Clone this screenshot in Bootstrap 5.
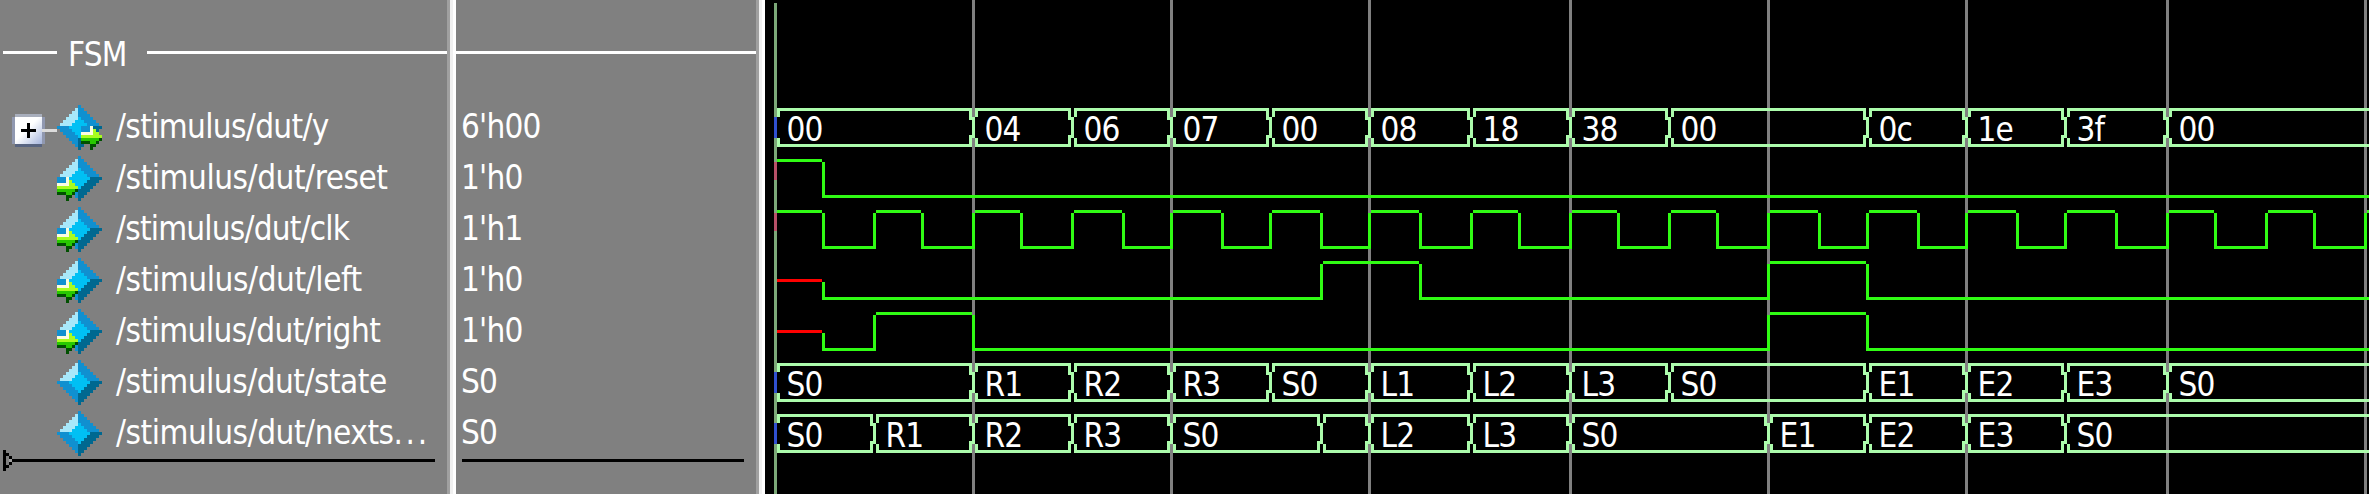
<!DOCTYPE html>
<html lang="en">
<head>
<meta charset="utf-8">
<meta name="viewport" content="width=device-width, initial-scale=1">
<title>Wave - FSM</title>
<link href="https://cdn.jsdelivr.net/npm/bootstrap@5.3.0/dist/css/bootstrap.min.css" rel="stylesheet">
<style>
  body { background: #000; color: #fff; font-family: "DejaVu Sans Condensed", "DejaVu Sans", sans-serif; font-stretch: condensed; font-size: 33px; letter-spacing: -.8px; }
  .viewer { height: 494px; }
  .pane { background: #808080; flex: none; }
  .names { width: 447px; }
  .values { width: 300px; }
  .sash { width: 9px; flex: none; background: linear-gradient(90deg, #a0a0a0 3px, #f0f0f0 3px 6px, #fff 6px); }
  .divider-row { height: 102px; padding-top: 51px; }
  .rule { height: 3px; background: #fff; }
  .rule-start { width: 54px; margin-left: 3px; }
  .divider-name { line-height: 51px; width: 90px; padding-left: 11px; margin-top: -22px; }
  .signal { height: 51px; }
  .signal span { line-height: 49px; white-space: pre; }
  .signal-icon { margin: 3px 14px 0 0; }
  .names svg, .waves svg { display: block; flex: none; }
  .tree { width: 57px; height: 51px; }
  .dots { letter-spacing: 2.6px; }
  .insert-mark { margin-top: -9px; }
  .values .signal { padding-left: 5px; }
  .values .endline { height: 3px; background: #000; margin: 0 12px 0 6px; }
  .waves { background: #000; }
  .waves text { fill: #fff; }
</style>
</head>
<body>
<main class="viewer d-flex overflow-hidden">
  <section class="pane names">
    <div class="divider-row d-flex">
      <div class="rule rule-start"></div>
      <div class="divider-name">FSM</div>
      <div class="rule flex-grow-1"></div>
    </div>
    <div id="names"></div>
    <svg class="insert-mark" width="447" height="21" viewBox="0 0 149 7" shape-rendering="crispEdges"><path d="M1 0h1v7h-1zM2 1h1v1h-1zM2 5h1v1h-1zM3 2h1v1h-1zM3 4h1v1h-1zM4 3h141v1h-141z"/><path fill="#a0a0a0" d="M3 3h1v1h-1z"/></svg>
  </section>
  <div class="sash"></div>
  <section class="pane values">
    <div class="divider-row"><div class="rule"></div></div>
    <div id="values"></div>
    <div class="endline"></div>
  </section>
  <div class="sash"></div>
  <section class="waves flex-grow-1 position-relative">
    <div id="grid" class="position-absolute top-0 start-0"></div>
    <div class="position-relative"><div class="divider-row"></div><div id="waves"></div></div>
  </section>
</main>
<script src="https://cdn.jsdelivr.net/npm/bootstrap@5.3.0/dist/js/bootstrap.bundle.min.js"></script>
<script>
  // One drawing unit is 3px; time positions are counted in units from the window's left edge.
  const U = 3, X0 = 255, END = 790;
  const clk = [258,274,291,307,324,340,357,374,390,407,423,440,456,473,490,506,523,539,556,572,589,606,622,639,655,672,688,705,722,738,755,771,788,800];
  const signals = [
    { name: 'y', track: -.65, value: "6'h00", dir: 'out', bus: [[258,'00'],[324,'04'],[357,'06'],[390,'07'],[423,'00'],[456,'08'],[490,'18'],[523,'38'],[556,'00'],[622,'0c'],[655,'1e'],[688,'3f'],[722,'00']] },
    { name: 'reset', track: -.45, value: "1'h0", dir: 'in', mark: 1, levels: [[258,1],[274,0]] },
    { name: 'clk', track: -.8, value: "1'h1", dir: 'in', mark: 1, levels: clk.map((x, i) => [x, i % 2 ? 0 : 1]) },
    { name: 'left', track: -.4, value: "1'h0", dir: 'in', levels: [[258,'x'],[274,0],[440,1],[473,0],[589,1],[622,0]] },
    { name: 'right', track: -.55, value: "1'h0", dir: 'in', levels: [[258,'x'],[274,0],[291,1],[324,0],[589,1],[622,0]] },
    { name: 'state', track: -.5, value: 'S0', bus: [[258,'S0'],[324,'R1'],[357,'R2'],[390,'R3'],[423,'S0'],[456,'L1'],[490,'L2'],[523,'L3'],[556,'S0'],[622,'E1'],[655,'E2'],[688,'E3'],[722,'S0']] },
    { name: 'nexts<b class="dots fw-normal">...</b>', track: -.45, value: 'S0', bus: [[258,'S0'],[291,'R1'],[324,'R2'],[357,'R3'],[390,'S0'],[440,''],[456,'L2'],[490,'L3'],[523,'S0'],[589,'E1'],[622,'E2'],[655,'E3'],[688,'S0']] }
  ];
  const box = (x, y, w, h, c) => `<rect x="${x}" y="${y}" width="${w}" height="${h}" fill="${c}"/>`;

  function diamond(dir) {
    let s = '';
    for (let r = 0; r < 15; r++) {
      const h = Math.min(r, 14 - r), k = 3 - Math.abs(r - 7);
      s += box(7 - h, r, h, 1, r < 7 ? '#a8e8fa' : '#1090d0');
      s += box(7, r, h + 1, 1, r < 7 ? '#1090d0' : '#006890');
      if (k >= 0) s += box(7 - k, r, 2 * k + 1, 1, '#00c0f4');
    }
    if (dir) {
      const o = dir === 'out' ? 8 : 0;
      s += box(o, 7, 3, 2, '#1090d0') + box(o + 3, 7, 1, 2, '#fcfce0') + box(o, 9, 4, 1, '#fcfce0')
        + box(o + 4, 8, 1, 1, '#a8fc20') + box(o + 4, 9, 2, 1, '#a8fc20') + box(o, 10, 7, 1, '#a8fc20')
        + box(o, 11, 6, 1, '#28c800') + box(o + 6, 11, 1, 1, '#005000') + box(o, 12, 6, 1, '#005000')
        + box(o + 3, 12, 2, 1, '#28c800') + box(o + 3, 13, 2, 1, '#005000') + box(o + 3, 14, 1, 1, '#005000');
    }
    return `<svg width="45" height="45" viewBox="0 0 15 15" shape-rendering="crispEdges">${s}</svg>`;
  }

  const expander = `<svg class="tree" viewBox="0 0 19 17" shape-rendering="crispEdges"><defs><linearGradient id="face" x1="0" y1="0" x2="1" y2="1"><stop offset=".45" stop-color="#fff"/><stop offset="1" stop-color="#a4b4dc"/></linearGradient></defs>`
    + box(5, 4, 9, 11, '#a8aebc') + box(4, 5, 11, 9, '#9098b0') + box(5, 14, 9, 1, '#586480')
    + box(5, 5, 9, 9, 'url(#face)') + box(7, 9, 5, 1, '#000') + box(9, 7, 1, 5, '#000') + box(14, 9, 5, 1, '#dcdcdc') + '</svg>';

  function wave(sig) {
    const G = '#30fc14', P = '#acfcac';
    let s = '', t = '';
    if (sig.bus) {
      sig.bus.forEach(([x, label], i) => {
        const end = i + 1 < sig.bus.length ? sig.bus[i + 1][0] : END;
        s += box(x + 1, 2, end - x - 1, 1, P) + box(x + 1, 14, end - x - 1, 1, P);
        s += box(x + 1, 2, 1, 3, P) + box(x + 1, 12, 1, 3, P);
        if (end < END) s += box(end - 1, 2, 1, 4, P) + box(end - 1, 11, 1, 4, P);
        s += box(x, 5, 1, 7, i ? P : '#3050d0');
        if (label) t += `<text x="${(x - X0) * U + 12.5}" y="39">${label}</text>`;
      });
    } else {
      const Y = { 1: 2, 0: 14, x: 8 };
      sig.levels.forEach(([x, v], i) => {
        const end = i + 1 < sig.levels.length ? sig.levels[i + 1][0] : END;
        s += box(x + 1, Y[v], end - x - 1, 1, v === 'x' ? '#f00' : G);
        if (i) {
          const top = Math.min(Y[v], Y[sig.levels[i - 1][1]]);
          s += box(x, top + 1, 1, 14 - top, G);
        }
      });
      if (sig.mark) s += box(258, 3, 1, 6, '#b85068');
    }
    return `<svg width="1604" height="51"><g transform="scale(3) translate(-${X0})" shape-rendering="crispEdges">${s}</g>${t}</svg>`;
  }

  document.getElementById('names').innerHTML = signals.map(s =>
    `<div class="signal d-flex align-items-start">${s.dir === 'out' ? expander : '<i class="tree"></i>'}<div class="signal-icon">${diamond(s.dir)}</div><span style="letter-spacing:${s.track}px">/stimulus/dut/${s.name}</span></div>`).join('');
  document.getElementById('values').innerHTML = signals.map(s => `<div class="signal"><span class="d-block">${s.value}</span></div>`).join('');
  document.getElementById('waves').innerHTML = signals.map(wave).join('');
  document.getElementById('grid').innerHTML = `<svg width="1604" height="494"><g transform="scale(3) translate(-${X0})" shape-rendering="crispEdges">`
    + [324,390,456,523,589,655,722,788].map(x => box(x, 0, 1, 165, '#808080')).join('') + box(258, 1, 1, 164, '#7ca878') + '</g></svg>';
</script>
</body>
</html>
